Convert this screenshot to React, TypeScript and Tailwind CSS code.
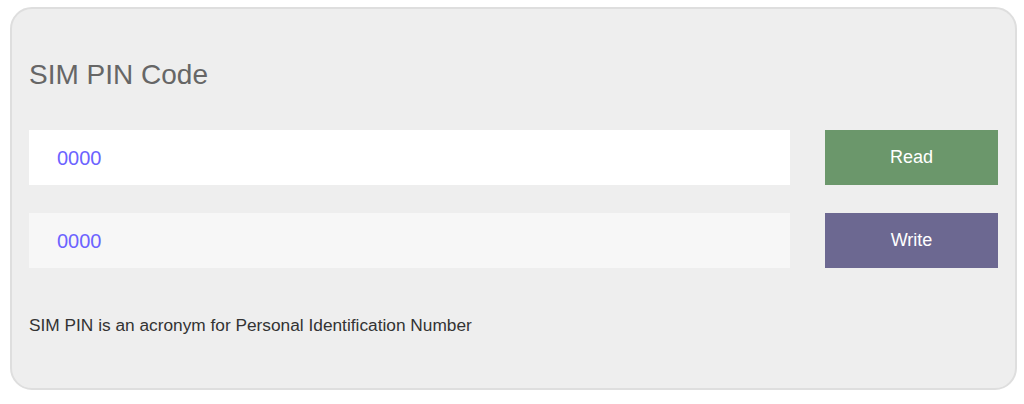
export default function App() {
  return (
    <div className="min-h-screen bg-white pl-[10px] pt-[7px]" style={{ fontFamily: '"Liberation Sans", Arial, sans-serif' }}>
      <div className="w-[1007px] rounded-[22px] border-2 border-[#dedede] bg-[#eeeeee] px-[17px] pb-[51px] pt-[50px]">
        <h2 className="text-[28px] leading-[32px] text-[#666666]">SIM PIN Code</h2>
        <div className="mt-[39px] flex flex-col gap-[28px]">
          <div className="flex items-center gap-[35px]">
            <div className="flex h-[55px] flex-1 items-center bg-white pl-[28px] text-[20px] text-[#6c63ff]">0000</div>
            <button className="h-[55px] w-[173px] bg-[#6b976b] text-[18px] text-white">Read</button>
          </div>
          <div className="flex items-center gap-[35px]">
            <div className="flex h-[55px] flex-1 items-center bg-[#f7f7f7] pl-[28px] text-[20px] text-[#6c63ff]">0000</div>
            <button className="h-[55px] w-[173px] bg-[#6c6891] text-[18px] text-white">Write</button>
          </div>
        </div>
        <p className="mt-[45px] text-[17.3px] leading-[24px] text-[#333333]">
          SIM PIN is an acronym for Personal Identification Number
        </p>
      </div>
    </div>
  )
}
